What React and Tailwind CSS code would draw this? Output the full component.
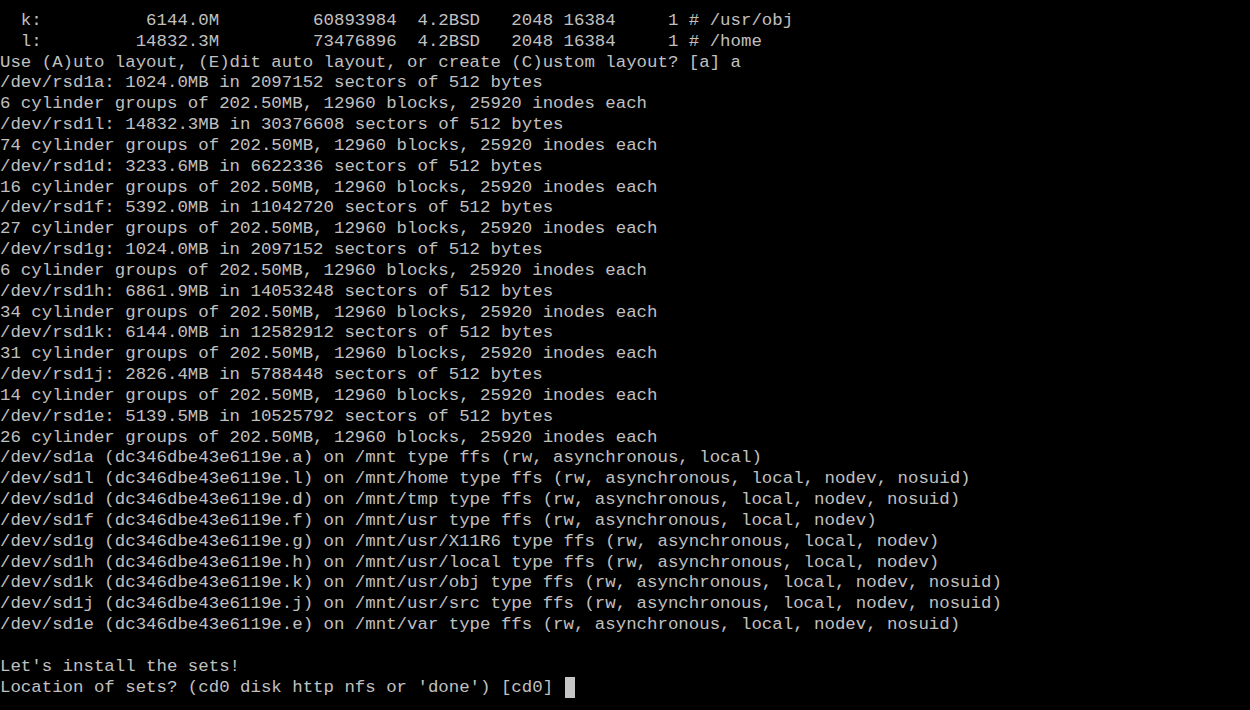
import React from 'react';

const lines = [
  '  k:          6144.0M         60893984  4.2BSD   2048 16384     1 # /usr/obj',
  '  l:         14832.3M         73476896  4.2BSD   2048 16384     1 # /home',
  'Use (A)uto layout, (E)dit auto layout, or create (C)ustom layout? [a] a',
  '/dev/rsd1a: 1024.0MB in 2097152 sectors of 512 bytes',
  '6 cylinder groups of 202.50MB, 12960 blocks, 25920 inodes each',
  '/dev/rsd1l: 14832.3MB in 30376608 sectors of 512 bytes',
  '74 cylinder groups of 202.50MB, 12960 blocks, 25920 inodes each',
  '/dev/rsd1d: 3233.6MB in 6622336 sectors of 512 bytes',
  '16 cylinder groups of 202.50MB, 12960 blocks, 25920 inodes each',
  '/dev/rsd1f: 5392.0MB in 11042720 sectors of 512 bytes',
  '27 cylinder groups of 202.50MB, 12960 blocks, 25920 inodes each',
  '/dev/rsd1g: 1024.0MB in 2097152 sectors of 512 bytes',
  '6 cylinder groups of 202.50MB, 12960 blocks, 25920 inodes each',
  '/dev/rsd1h: 6861.9MB in 14053248 sectors of 512 bytes',
  '34 cylinder groups of 202.50MB, 12960 blocks, 25920 inodes each',
  '/dev/rsd1k: 6144.0MB in 12582912 sectors of 512 bytes',
  '31 cylinder groups of 202.50MB, 12960 blocks, 25920 inodes each',
  '/dev/rsd1j: 2826.4MB in 5788448 sectors of 512 bytes',
  '14 cylinder groups of 202.50MB, 12960 blocks, 25920 inodes each',
  '/dev/rsd1e: 5139.5MB in 10525792 sectors of 512 bytes',
  '26 cylinder groups of 202.50MB, 12960 blocks, 25920 inodes each',
  '/dev/sd1a (dc346dbe43e6119e.a) on /mnt type ffs (rw, asynchronous, local)',
  '/dev/sd1l (dc346dbe43e6119e.l) on /mnt/home type ffs (rw, asynchronous, local, nodev, nosuid)',
  '/dev/sd1d (dc346dbe43e6119e.d) on /mnt/tmp type ffs (rw, asynchronous, local, nodev, nosuid)',
  '/dev/sd1f (dc346dbe43e6119e.f) on /mnt/usr type ffs (rw, asynchronous, local, nodev)',
  '/dev/sd1g (dc346dbe43e6119e.g) on /mnt/usr/X11R6 type ffs (rw, asynchronous, local, nodev)',
  '/dev/sd1h (dc346dbe43e6119e.h) on /mnt/usr/local type ffs (rw, asynchronous, local, nodev)',
  '/dev/sd1k (dc346dbe43e6119e.k) on /mnt/usr/obj type ffs (rw, asynchronous, local, nodev, nosuid)',
  '/dev/sd1j (dc346dbe43e6119e.j) on /mnt/usr/src type ffs (rw, asynchronous, local, nodev, nosuid)',
  '/dev/sd1e (dc346dbe43e6119e.e) on /mnt/var type ffs (rw, asynchronous, local, nodev, nosuid)',
  '',
  "Let's install the sets!",
];

export default function App() {
  return (
    <div className="w-[1250px] h-[710px] bg-black overflow-hidden pt-[11px]">
      <pre className="font-['Liberation_Mono',monospace] text-[17.4px] leading-[20.84px] text-[#c0c0c0] whitespace-pre m-0">
        {lines.map((l, i) => (
          <div key={i} className="h-[20.84px]">{l}</div>
        ))}
        <div className="h-[20.84px] flex items-center">
          <span>{"Location of sets? (cd0 disk http nfs or 'done') [cd0] "}</span>
          <span className="inline-block w-[10px] h-[21px] ml-[1px] bg-[#c6c6c6]" />
        </div>
      </pre>
    </div>
  );
}
